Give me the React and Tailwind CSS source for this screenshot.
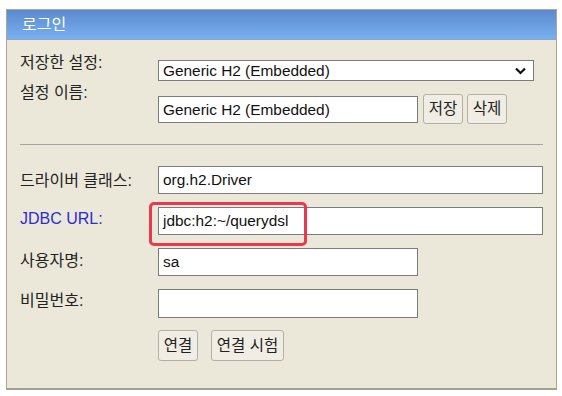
// App.jsx — H2 console login panel

const font = { fontFamily: '"Liberation Sans", "Noto Sans CJK KR", sans-serif' }

function Label({ children, className = '' }) {
  return (
    <span className={`w-[138px] shrink-0 text-[16px] leading-[18px] text-[#222] ${className}`}>
      {children}
    </span>
  )
}

function Field({ value, className = '' }) {
  return (
    <div className={`bg-white border border-[#7b7b7b] flex items-center pl-[4px] text-[15.4px] text-[#111] ${className}`}>
      {value}
    </div>
  )
}

function Btn({ children, className = '' }) {
  return (
    <button className={`bg-[#efede4] border border-[#b4b1a4] rounded-[3px] text-[15.5px] text-[#222] flex items-center justify-center ${className}`}>
      {children}
    </button>
  )
}

export default function App() {
  return (
    <div className="w-[562px] h-[396px] bg-white pt-[9px] pl-[6px]" style={font}>
      <div className="w-[551px] bg-[#ebe8da] border border-[#aaa795] border-b-2 border-b-[#a3a08e]">

        {/* ── Header ── */}
        <div className="h-[30px] bg-gradient-to-b from-[#5b8ace] to-[#79b0f2] border-b border-[#8ea6c2] flex items-center pl-[15px] text-white text-[16px]">
          로그인
        </div>

        {/* ── Body ── */}
        <div className="pl-[13px] pb-[27px] flex flex-col">

          {/* Saved settings */}
          <div className="flex items-start mt-[14px]">
            <Label>저장한 설정:</Label>
            <div className="mt-[6px] w-[376px] h-[21px] bg-white border border-[#7b7b7b] flex items-center justify-between pl-[4px] pr-[7px] text-[15.4px] text-[#111]">
              <span>Generic H2 (Embedded)</span>
              <svg width="11" height="8" viewBox="0 0 11 8">
                <path d="M1 1.5 L5.5 6 L10 1.5" fill="none" stroke="#111" strokeWidth="2.2" />
              </svg>
            </div>
          </div>

          {/* Setting name */}
          <div className="flex items-start mt-[3px]">
            <Label>설정 이름:</Label>
            <Field value="Generic H2 (Embedded)" className="mt-[12px] w-[260px] h-[27px]" />
            <Btn className="mt-[10px] ml-[5px] w-[40px] h-[30px]">저장</Btn>
            <Btn className="mt-[10px] ml-[4px] w-[40px] h-[30px]">삭제</Btn>
          </div>

          <div className="mt-[20px] w-[523px] h-px bg-[#a3a3a0]" />

          {/* Driver */}
          <div className="flex items-start mt-[21px]">
            <Label className="mt-[6px]">드라이버 클래스:</Label>
            <Field value="org.h2.Driver" className="w-[385px] h-[28px]" />
          </div>

          {/* JDBC URL */}
          <div className="flex items-start mt-[13px]">
            <Label className="mt-[3px] !text-[#2b2bd0]">JDBC URL:</Label>
            <div className="relative">
              <Field value="jdbc:h2:~/querydsl" className="w-[385px] h-[28px]" />
              <div className="absolute left-[-9px] top-[-5px] w-[158px] h-[44px] border-[3px] border-[#e8394f] rounded-[5px]" />
            </div>
          </div>

          {/* User */}
          <div className="flex items-start mt-[13px]">
            <Label className="mt-[4px]">사용자명:</Label>
            <Field value="sa" className="w-[260px] h-[28px]" />
          </div>

          {/* Password */}
          <div className="flex items-start mt-[13px]">
            <Label className="mt-[3px]">비밀번호:</Label>
            <Field value="" className="w-[260px] h-[29px]" />
          </div>

          {/* Actions */}
          <div className="flex items-start mt-[12px] pl-[138px] gap-[13px]">
            <Btn className="w-[40px] h-[31px]">연결</Btn>
            <Btn className="w-[73px] h-[31px]">연결 시험</Btn>
          </div>

        </div>
      </div>
    </div>
  )
}
